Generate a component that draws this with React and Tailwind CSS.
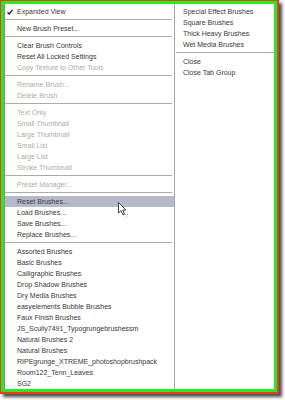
import React from "react";

const leftItems = [
  { t: "Expanded View", check: true },
  "sep",
  { t: "New Brush Preset..." },
  "sep",
  { t: "Clear Brush Controls" },
  { t: "Reset All Locked Settings" },
  { t: "Copy Texture to Other Tools", off: true },
  "sep",
  { t: "Rename Brush...", off: true },
  { t: "Delete Brush", off: true },
  "sep",
  { t: "Text Only", off: true },
  { t: "Small Thumbnail", off: true },
  { t: "Large Thumbnail", off: true },
  { t: "Small List", off: true },
  { t: "Large List", off: true },
  { t: "Stroke Thumbnail", off: true },
  "sep",
  { t: "Preset Manager...", off: true },
  "sep",
  { t: "Reset Brushes...", hover: true },
  { t: "Load Brushes..." },
  { t: "Save Brushes..." },
  { t: "Replace Brushes..." },
  "sep",
  { t: "Assorted Brushes" },
  { t: "Basic Brushes" },
  { t: "Calligraphic Brushes" },
  { t: "Drop Shadow Brushes" },
  { t: "Dry Media Brushes" },
  { t: "easyelements Bubble Brushes" },
  { t: "Faux Finish Brushes" },
  { t: "JS_Scully7491_Typogrungebrushessm" },
  { t: "Natural Brushes 2" },
  { t: "Natural Brushes" },
  { t: "RIPEgrunge_XTREME_photoshopbrushpack" },
  { t: "Room122_Tenn_Leaves" },
  { t: "SG2" },
];

const rightItems = [
  { t: "Special Effect Brushes" },
  { t: "Square Brushes" },
  { t: "Thick Heavy Brushes" },
  { t: "Wet Media Brushes" },
  "sep",
  { t: "Close" },
  { t: "Close Tab Group" },
];

function Sep({ className }) {
  return (
    <div className={"h-[6px] flex flex-col justify-center " + className}>
      <div className="h-px bg-[#ababab]" />
      <div className="h-px bg-white" />
    </div>
  );
}

function Row({ item, pad }) {
  return (
    <div
      className={
        "h-[11px] flex items-center whitespace-nowrap leading-[11px] " +
        pad +
        (item.hover ? " bg-[#b6b9c9]" : "") +
        (item.off ? " text-[#adadad]" : " text-[#383838]")
      }
    >
      {pad === "pl-[2px]" && (
        <span className="w-[10px] flex items-center">
          {item.check && (
            <svg width="6" height="6" viewBox="0 0 6 6">
              <path d="M0.5 3.2 L2.2 5 L5.5 0.8" fill="none" stroke="#222" strokeWidth="1.3" />
            </svg>
          )}
        </span>
      )}
      <span>{item.t}</span>
    </div>
  );
}

export default function App() {
  return (
    <div
      className="w-[285px] h-[400px] bg-white overflow-hidden relative text-[7px]"
      style={{ fontFamily: '"Liberation Sans", Arial, sans-serif' }}
    >
      <div className="w-[279px] h-[394px] border-t border-l border-r-2 border-b-2 border-[#f03c1e] shadow-[3px_3px_3px_rgba(0,0,0,0.7)]">
        <div className="h-full border-[3px] border-[#22ee22]">
          <div className="h-full flex bg-white border-l border-[#8a8a8a] overflow-hidden">
            <div className="w-[169px] pt-[2px]">
              {leftItems.map((it, i) =>
                it === "sep" ? (
                  <Sep key={i} className="mr-[2px]" />
                ) : (
                  <Row key={i} item={it} pad="pl-[2px]" />
                )
              )}
            </div>
            <div className="flex-1 pt-[2px] border-l border-[#a7a7a7]">
              {rightItems.map((it, i) =>
                it === "sep" ? (
                  <Sep key={i} className="ml-[1px]" />
                ) : (
                  <Row key={i} item={it} pad="pl-[8px]" />
                )
              )}
            </div>
          </div>
        </div>
      </div>
      <svg className="absolute left-[118px] top-[202px]" width="11" height="16" viewBox="0 0 11 16">
        <path
          d="M0.5 0.5 L0.5 11 L3 8.6 L5 13 L6.6 12.3 L4.7 8 L8 8 Z"
          fill="#fff"
          stroke="#444"
          strokeWidth="1"
          strokeLinejoin="round"
        />
        <rect x="7" y="12" width="1" height="1" fill="#999" />
        <rect x="9" y="12" width="1" height="1" fill="#999" />
        <rect x="8" y="14" width="1" height="1" fill="#aaa" />
      </svg>
    </div>
  );
}
